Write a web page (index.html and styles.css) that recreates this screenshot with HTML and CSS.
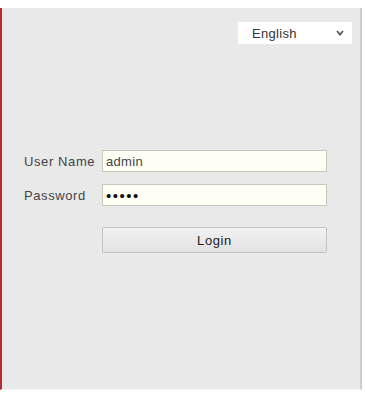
FILE: index.html
```html
<!DOCTYPE html>
<html lang="en">
<head>
    <meta charset="UTF-8">
    <title>Login</title>
    <link rel="stylesheet" href="styles.css">
</head>
<body>
    <div class="panel">
        <div class="lang-row">
            <div class="lang-select">
                <span>English</span>
                <svg class="chevron" width="8" height="6" viewBox="0 0 8 6"><path d="M1 1 L4 4.5 L7 1" fill="none" stroke="#555" stroke-width="1.8"/></svg>
            </div>
        </div>
        <form class="login-form">
            <div class="row">
                <label>User Name</label>
                <input type="text" class="field" value="admin">
            </div>
            <div class="row">
                <label>Password</label>
                <input type="password" class="field pass" value="admin">
            </div>
            <div class="row">
                <span class="spacer"></span>
                <button type="button" class="btn">Login</button>
            </div>
        </form>
    </div>
</body>
</html>
```

FILE: styles.css
```css
* {
    margin: 0;
    padding: 0;
    box-sizing: border-box;
}
body {
    font-family: 'Liberation Sans', Arial, sans-serif;
    background-color: #ffffff;
    padding-top: 8px;
    width: 365px;
    height: 393px;
    overflow: hidden;
}
.panel {
    width: 362px;
    height: 382px;
    background-color: #e9e9e9;
    border-left: 2px solid #a8323a;
    border-right: 2px solid #cdcdcd;
    border-bottom: 1px solid #f4f4f4;
    padding: 14px 8px 0 22px;
}
.lang-row {
    display: flex;
    justify-content: flex-end;
}
.lang-select {
    width: 114px;
    height: 22px;
    background-color: #ffffff;
    display: flex;
    align-items: center;
    justify-content: space-between;
    padding: 0 8px 0 14px;
    font-size: 13px;
    letter-spacing: 0.3px;
    color: #333;
}
.login-form {
    margin-top: 106px;
    display: flex;
    flex-direction: column;
    gap: 12px;
}
.row {
    display: flex;
    align-items: center;
}
.row label, .spacer {
    width: 78px;
    font-size: 13px;
    letter-spacing: 0.6px;
    color: #444;
}
.field {
    width: 225px;
    height: 22px;
    border: 1px solid #c8c8bc;
    background-color: #fffff6;
    font-family: inherit;
    font-size: 13px;
    letter-spacing: 0.3px;
    color: #444;
    padding: 0 3px;
}
.pass {
    font-size: 15px;
    letter-spacing: 1.5px;
    color: #111;
}
.btn {
    margin-top: 9px;
    width: 225px;
    height: 26px;
    border: 1px solid #c4c4c4;
    border-radius: 2px;
    background: linear-gradient(#f2f2f2, #e2e2e2);
    font-family: inherit;
    font-size: 13px;
    letter-spacing: 0.6px;
    color: #222;
}
```
